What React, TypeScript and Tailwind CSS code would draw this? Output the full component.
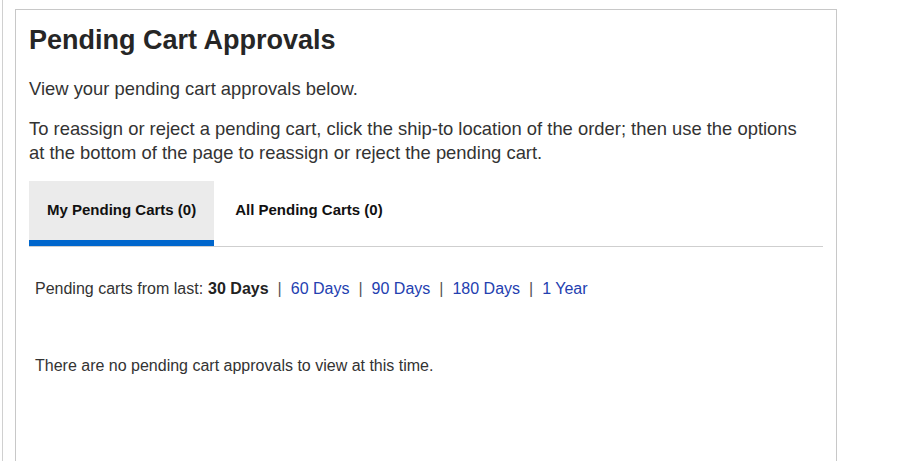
import React from "react";

export default function App() {
  const font = { fontFamily: '"Liberation Sans", Arial, Helvetica, sans-serif' };
  return (
    <div className="w-[898px] h-[461px] bg-white overflow-hidden flex text-[#333]" style={font}>
      <div className="ml-[2px] w-px h-full bg-[#d0d0d0]" />
      <div className="ml-[12px] mt-[9px] w-[822px] h-[470px] border border-b-0 border-[#c8c8c8] px-[13px] pt-[14px]">
        <h1 className="text-[27px] font-bold leading-[32px] text-[#262626]">Pending Cart Approvals</h1>
        <p className="mt-[21px] text-[18.4px] leading-[24px]">View your pending cart approvals below.</p>
        <p className="mt-[16px] pr-[10px] text-[18.4px] leading-[24px]">
          To reassign or reject a pending cart, click the ship-to location of the order; then use the options at the bottom of the page to reassign or reject the pending cart.
        </p>
        <div className="mt-[16px] flex border-b border-[#cfcfcf]">
          <div className="h-[65px] bg-[#ebebeb] border-b-[6px] border-[#0066cc] px-[18px] flex items-center text-[15px] font-bold text-[#111]">
            My Pending Carts (0)
          </div>
          <div className="h-[65px] border-b-[6px] border-transparent px-[21px] flex items-center text-[15px] font-bold text-[#111]">
            All Pending Carts (0)
          </div>
        </div>
        <div className="mt-[31px] pl-[6px] text-[16px] leading-[22px] flex items-center">
          <span>Pending carts from last:</span>
          <span className="ml-[5px] font-bold text-[#222]">30 Days</span>
          <span className="mx-[9px] text-[#555]">|</span>
          <a className="text-[#2340b0]">60 Days</a>
          <span className="mx-[9px] text-[#555]">|</span>
          <a className="text-[#2340b0]">90 Days</a>
          <span className="mx-[9px] text-[#555]">|</span>
          <a className="text-[#2340b0]">180 Days</a>
          <span className="mx-[9px] text-[#555]">|</span>
          <a className="text-[#2340b0]">1 Year</a>
        </div>
        <p className="mt-[55px] pl-[6px] text-[16px] leading-[22px]">There are no pending cart approvals to view at this time.</p>
      </div>
    </div>
  );
}
